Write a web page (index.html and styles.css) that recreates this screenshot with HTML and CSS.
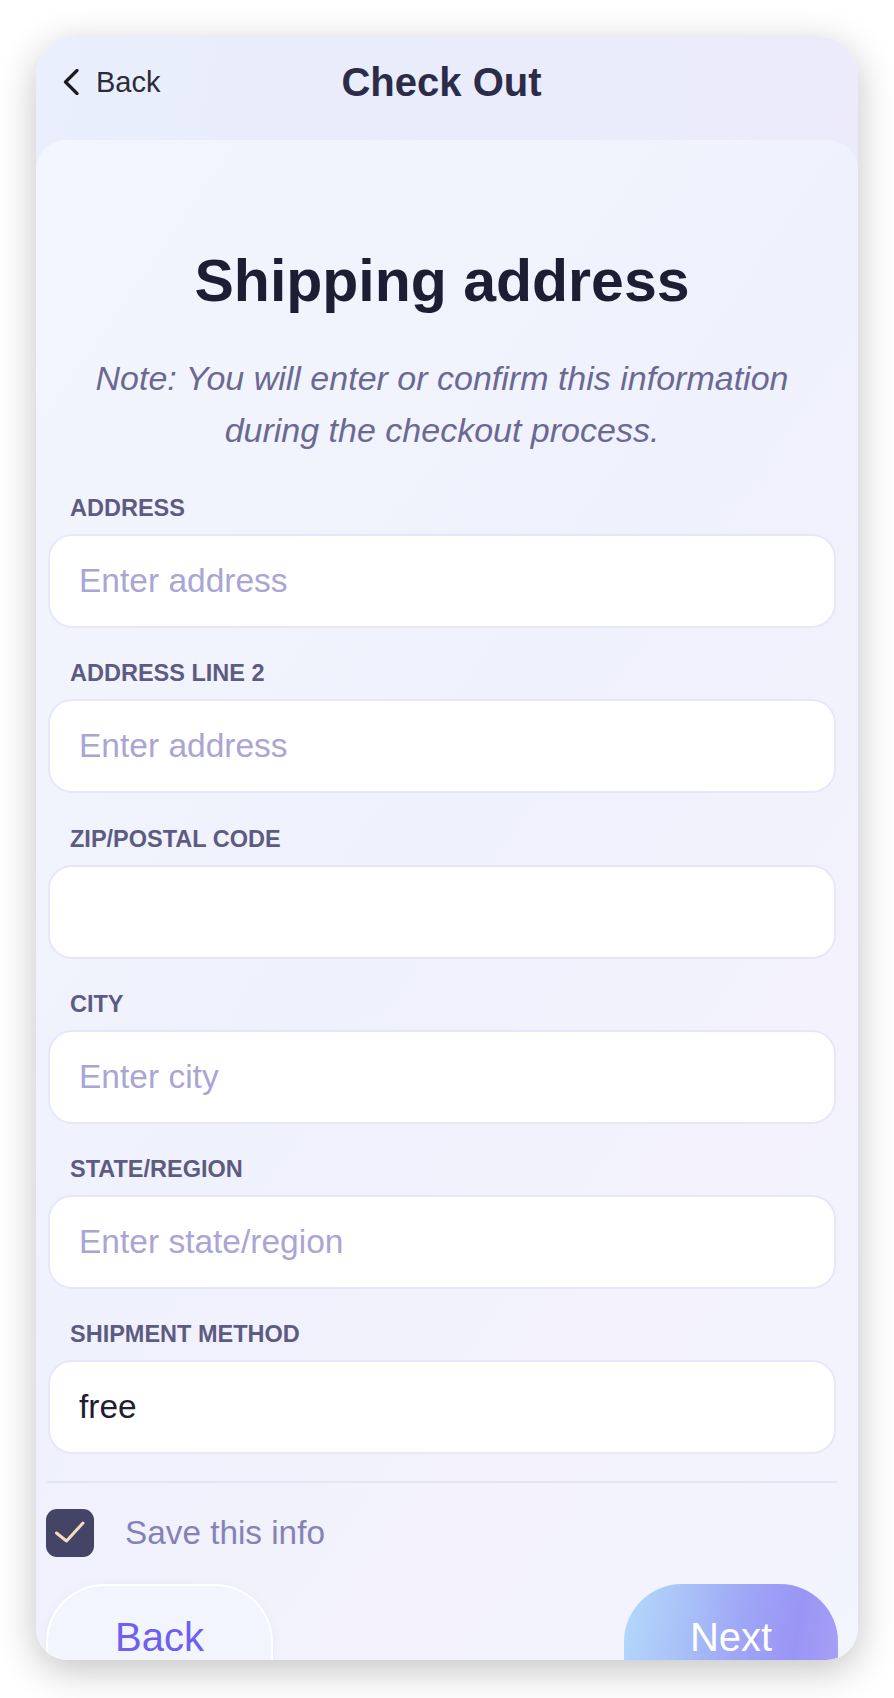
FILE: index.html
```html
<!DOCTYPE html>
<html lang="en">
<head>
<meta charset="utf-8">
<title>Check Out</title>
<link rel="stylesheet" href="styles.css">
</head>
<body>
<div class="phone">
  <header class="topbar">
    <a class="back-link" href="#">
      <svg class="chev" width="16" height="26" viewBox="0 0 16 26" aria-hidden="true"><path d="M14 1.5 L2.5 13 L14 24.5" fill="none" stroke="#1c1c1f" stroke-width="3.2" stroke-linecap="round" stroke-linejoin="round"/></svg>
      <span>Back</span>
    </a>
    <h1 class="topbar-title">Check Out</h1>
    <span></span>
  </header>
  <main class="card">
    <h2 class="title">Shipping address</h2>
    <p class="note">Note: You will enter or confirm this information during the checkout process.</p>
    <div class="fields">
      <div class="field">
        <div class="label">Address</div>
        <div class="input"><span class="ph">Enter address</span></div>
      </div>
      <div class="field">
        <div class="label">Address line 2</div>
        <div class="input"><span class="ph">Enter address</span></div>
      </div>
      <div class="field">
        <div class="label">Zip/postal code</div>
        <div class="input"></div>
      </div>
      <div class="field">
        <div class="label">City</div>
        <div class="input"><span class="ph">Enter city</span></div>
      </div>
      <div class="field">
        <div class="label">State/region</div>
        <div class="input"><span class="ph">Enter state/region</span></div>
      </div>
      <div class="field">
        <div class="label">Shipment method</div>
        <div class="input"><span class="val">free</span></div>
      </div>
    </div>
    <hr class="divider">
    <div class="save-row">
      <span class="checkbox">
        <svg width="48" height="48" viewBox="0 0 48 48" aria-hidden="true"><path d="M10.5 24 L20.5 32 L37 14" fill="none" stroke="#f3dfc0" stroke-width="3" stroke-linecap="round" stroke-linejoin="round"/></svg>
      </span>
      <span class="save-text">Save this info</span>
    </div>
    <div class="actions">
      <button class="btn btn-back"><span class="btn-label">Back</span></button>
      <button class="btn btn-next"><span class="btn-label">Next</span></button>
    </div>
  </main>
</div>
</body>
</html>
```
FILE: styles.css
```css
* { box-sizing: border-box; }
html, body {
  margin: 0;
  padding: 0;
  background: #ffffff;
  font-family: "Liberation Sans", Arial, sans-serif;
}
body {
  width: 894px;
  height: 1698px;
  overflow: hidden;
}
.phone {
  margin: 36px 36px 0 36px;
  width: 822px;
  height: 1624px;
  border-radius: 40px 40px 32px 32px;
  overflow: hidden;
  display: flex;
  flex-direction: column;
  background: linear-gradient(100deg, #e9effc 0%, #eaebfb 55%, #eee9fb 100%);
  box-shadow: 0 10px 38px rgba(0, 0, 0, 0.24);
}
.topbar {
  height: 104px;
  flex: none;
  display: grid;
  grid-template-columns: 1fr auto 1fr;
  align-items: center;
  padding: 0 38px 12px 27px;
}
.back-link {
  display: flex;
  align-items: center;
  gap: 17px;
  color: #2b2b3a;
  text-decoration: none;
  font-size: 29px;
}
.chev { display: block; }
.topbar-title {
  margin: 0;
  font-size: 40px;
  font-weight: bold;
  color: #2c2c48;
  line-height: 48px;
}
.card {
  flex: 1;
  border-radius: 30px 30px 0 0;
  background: linear-gradient(125deg, #f3f6fe 0%, #eff1fc 45%, #f3f2fd 75%, #f2f4fe 100%);
  padding: 106px 22px 0 12px;
  display: flex;
  flex-direction: column;
}
.title {
  margin: 0;
  text-align: center;
  font-size: 59px;
  line-height: 70px;
  font-weight: bold;
  color: #1d1d33;
}
.note {
  margin: 36px 0 0 0;
  padding: 0 40px;
  text-align: center;
  font-style: italic;
  font-size: 34px;
  line-height: 52px;
  color: #6b6992;
}
.fields {
  margin-top: 38px;
  display: flex;
  flex-direction: column;
  gap: 31.3px;
}
.field {
  display: flex;
  flex-direction: column;
  gap: 12px;
}
.label {
  padding-left: 22px;
  font-size: 23.5px;
  line-height: 28px;
  font-weight: bold;
  text-transform: uppercase;
  color: #5d5b82;
}
.input {
  height: 94px;
  background: #ffffff;
  border: 2px solid #e8e6fb;
  border-radius: 24px;
  display: flex;
  align-items: center;
  padding-left: 29px;
  font-size: 33.5px;
}
.ph { color: #a9a5d5; }
.val { color: #1e1e30; }
.divider {
  margin: 27px 0 0 -1px;
  width: 790px;
  height: 2px;
  border: 0;
  background: #e4e3f7;
}
.save-row {
  margin-top: 26px;
  display: flex;
  align-items: center;
  gap: 31px;
  margin-left: -2px;
}
.checkbox {
  width: 48px;
  height: 48px;
  border-radius: 11px;
  background: #444466;
  display: block;
  flex: none;
}
.checkbox svg { display: block; }
.save-text {
  font-size: 33.3px;
  color: #8582b5;
}
.actions {
  margin: 27px -2px 0 -2px;
  display: flex;
  justify-content: space-between;
  align-items: flex-start;
  flex: none;
}
.btn {
  height: 76px;
  border-radius: 58px 58px 0 0;
  font-family: "Liberation Sans", Arial, sans-serif;
  font-size: 40px;
  line-height: 34px;
  padding: 34px 0 0 0;
  display: flex;
  justify-content: center;
  align-items: flex-start;
  cursor: pointer;
}
.btn-label {
  display: block;
  line-height: 34px;
}
.btn-back {
  width: 227px;
  background: #f3f5fe;
  border: 2px solid #ffffff;
  border-bottom: 0;
  color: #6e5ff0;
  box-shadow: 0 2px 8px rgba(120, 120, 180, 0.08);
}
.btn-next {
  width: 214px;
  border: 0;
  padding-top: 36px;
  color: #ffffff;
  background: linear-gradient(100deg, #b4dafb 0%, #a9c2f8 28%, #9ea6f6 55%, #9a95f5 80%, #a79ff6 100%);
}
```
